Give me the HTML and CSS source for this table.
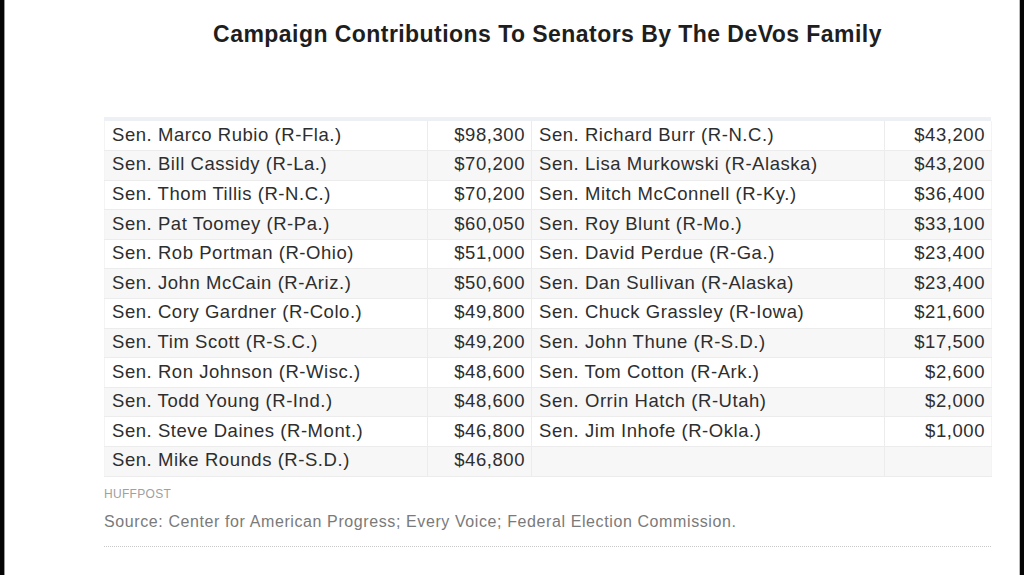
FILE: index.html
```html
<!DOCTYPE html>
<html>
<head>
<meta charset="utf-8">
<link rel="stylesheet" href="styles.css">
</head>
<body>
<div class="frame">
  <div class="edge edge-left"></div>
  <main class="content">
    <h1 class="title">Campaign Contributions To Senators By The DeVos Family</h1>
    <div class="table-wrap">
      <div class="thead-strip"></div>
      <table class="grid">
        <colgroup>
          <col class="c-name1"><col class="c-amt1"><col class="c-name2"><col class="c-amt2">
        </colgroup>
        <tbody>
          <tr><td>Sen. Marco Rubio (R-Fla.)</td><td class="amt">$98,300</td><td>Sen. Richard Burr (R-N.C.)</td><td class="amt">$43,200</td></tr>
          <tr><td>Sen. Bill Cassidy (R-La.)</td><td class="amt">$70,200</td><td>Sen. Lisa Murkowski (R-Alaska)</td><td class="amt">$43,200</td></tr>
          <tr><td>Sen. Thom Tillis (R-N.C.)</td><td class="amt">$70,200</td><td>Sen. Mitch McConnell (R-Ky.)</td><td class="amt">$36,400</td></tr>
          <tr><td>Sen. Pat Toomey (R-Pa.)</td><td class="amt">$60,050</td><td>Sen. Roy Blunt (R-Mo.)</td><td class="amt">$33,100</td></tr>
          <tr><td>Sen. Rob Portman (R-Ohio)</td><td class="amt">$51,000</td><td>Sen. David Perdue (R-Ga.)</td><td class="amt">$23,400</td></tr>
          <tr><td>Sen. John McCain (R-Ariz.)</td><td class="amt">$50,600</td><td>Sen. Dan Sullivan (R-Alaska)</td><td class="amt">$23,400</td></tr>
          <tr><td>Sen. Cory Gardner (R-Colo.)</td><td class="amt">$49,800</td><td>Sen. Chuck Grassley (R-Iowa)</td><td class="amt">$21,600</td></tr>
          <tr><td>Sen. Tim Scott (R-S.C.)</td><td class="amt">$49,200</td><td>Sen. John Thune (R-S.D.)</td><td class="amt">$17,500</td></tr>
          <tr><td>Sen. Ron Johnson (R-Wisc.)</td><td class="amt">$48,600</td><td>Sen. Tom Cotton (R-Ark.)</td><td class="amt">$2,600</td></tr>
          <tr><td>Sen. Todd Young (R-Ind.)</td><td class="amt">$48,600</td><td>Sen. Orrin Hatch (R-Utah)</td><td class="amt">$2,000</td></tr>
          <tr><td>Sen. Steve Daines (R-Mont.)</td><td class="amt">$46,800</td><td>Sen. Jim Inhofe (R-Okla.)</td><td class="amt">$1,000</td></tr>
          <tr><td>Sen. Mike Rounds (R-S.D.)</td><td class="amt">$46,800</td><td></td><td class="amt"></td></tr>
        </tbody>
      </table>
    </div>
    <div class="credit">HUFFPOST</div>
    <div class="source">Source: Center for American Progress; Every Voice; Federal Election Commission.</div>
    <div class="rule"></div>
  </main>
  <div class="edge edge-right"></div>
</div>
</body>
</html>
```
FILE: styles.css
```css
* { box-sizing: border-box; }
html, body { margin: 0; padding: 0; background: #fff; }
body { font-family: "Liberation Sans", Arial, sans-serif; color: #333; }
.frame { display: flex; width: 1024px; height: 575px; overflow: hidden; }
.edge { background: #050505; flex: none; }
.edge-left { width: 5px; border-right: 1px solid #9a9a9a; }
.edge-right { width: 5px; margin-left: auto; border-left: 1px solid #bbb; }
.content { width: 887px; margin-left: 99px; display: flex; flex-direction: column; }
.title {
  margin: 21px 0 0;
  font-size: 23px;
  font-weight: bold;
  text-align: center;
  color: #1e1e1e;
  line-height: 26px;
  letter-spacing: 0.45px;
}
.table-wrap { margin-top: 70px; }
.thead-strip { height: 4px; background: #edf0f4; }
.grid { width: 887px; border-collapse: collapse; table-layout: fixed; font-size: 18.5px; letter-spacing: 0.55px; color: #2e2e2e; }
.c-name1 { width: 323px; }
.c-amt1 { width: 104px; }
.c-name2 { width: 353px; }
.c-amt2 { width: 107px; }
.grid td { height: 29.6px; padding: 0 7px 2px; border: 1px solid #ececec; border-top: none; white-space: nowrap; line-height: 20px; }
.grid td:first-child { border-left-color: #f4f4f4; }
.grid td:last-child { border-right-color: #f4f4f4; }
.grid tr:nth-child(even) td { background: #f7f7f7; }
.grid td.amt { text-align: right; padding-right: 6px; }
.credit { margin-top: 10px; font-size: 12px; color: #a0a0a0; letter-spacing: 0.3px; }
.source { margin-top: 12px; font-size: 16px; letter-spacing: 0.6px; color: #7a7a7a; }
.rule { margin-top: 15px; border-top: 1px dotted #c8c8c8; }
```
